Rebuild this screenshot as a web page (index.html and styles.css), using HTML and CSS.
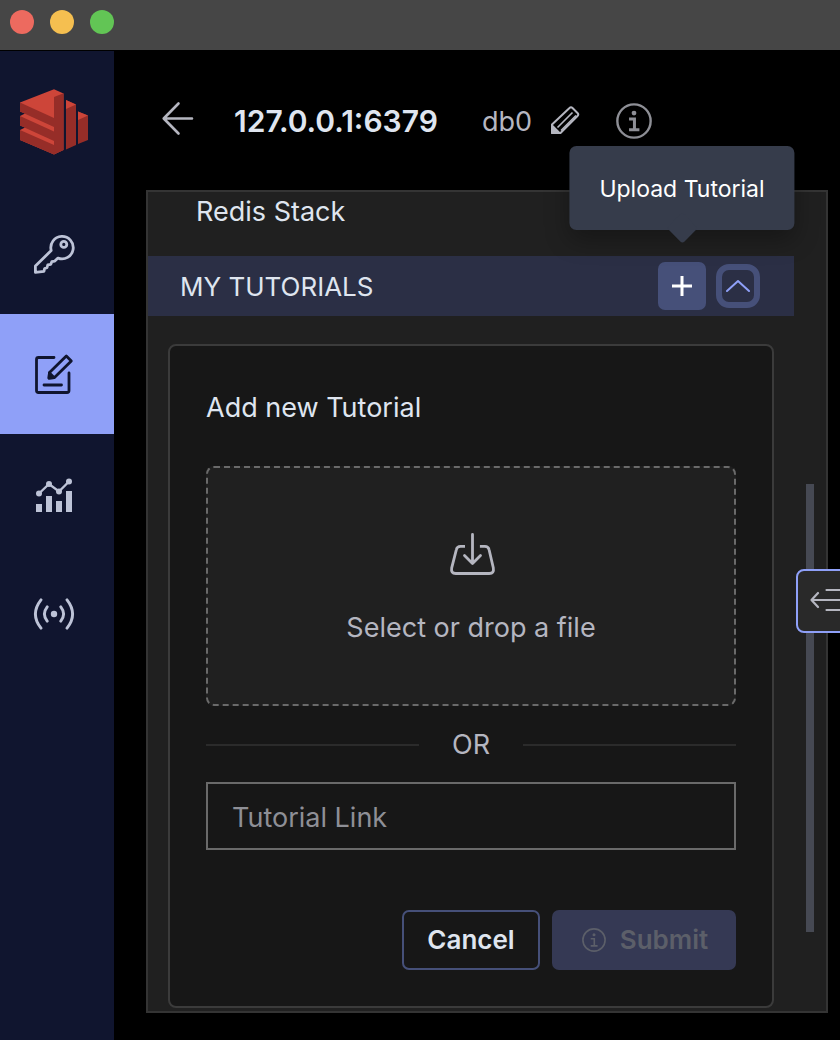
FILE: index.html
```html
<!DOCTYPE html>
<html lang="en">
<head>
<meta charset="utf-8">
<meta name="viewport" content="width=device-width, initial-scale=1">
<title>Redis Insight – Workbench</title>
<link rel="stylesheet" href="styles.css">
</head>
<body>
<div class="window">
  <div class="titlebar">
    <span class="light light-close"></span>
    <span class="light light-min"></span>
    <span class="light light-max"></span>
  </div>
  <div class="body">
    <nav class="sidebar" aria-label="Main">
      <a class="logo" href="#home" aria-label="Home">
        <svg width="68" height="66" viewBox="20 89 68 66">
          <path fill="#cd4539" d="M20 102.500 54 89.200l9.500 4.300V150L54 154.500 20 140v-10l5-2.500-5-2V116l5-2.500-5-2z"/>
          <path fill="#962d28" d="M54 97l9.500-3.700V150L54 154.500 20 140v-10l34 15v-4L20 125.500V116l34 15.500v-4.500L20 111.500v-9L54 118z"/>
          <path fill="#962d28" d="M66 100l10 4.500V145l-10 4.500zM78 111.500l10 4V140l-10 4z"/>
          <path fill="#cd4539" d="M66 100l10 4.500-10 4.500zM78 111.500l10 4-10 4.500z"/>
        </svg>
      </a>
      <a class="nav-item" href="#browser" aria-label="Browser">
        <svg width="44" height="44" viewBox="32 232 44 44" fill="none" stroke="currentColor" stroke-width="2.800" stroke-linejoin="round">
          <path d="M51.200 250.500a11.200 11.200 0 1 1 6.800 7.600l-3.200 3-3 .6-1 2.600-3 .6-.8 2.800-2.400.8-.6 2.800-8.600 1v-6.200z"/>
          <circle cx="63.800" cy="244.400" r="3"/>
        </svg>
      </a>
      <a class="nav-item active" href="#workbench" aria-label="Workbench" aria-current="page">
        <svg width="44" height="44" viewBox="32 352 44 44" fill="none" stroke="currentColor" stroke-width="2.800" stroke-linecap="round" stroke-linejoin="round">
          <path d="M54 357.500H38.500a2 2 0 0 0-2 2v31a2 2 0 0 0 2 2h28.500a2 2 0 0 0 2-2V373"/>
          <path d="M44 385h17.500M66.300 356l5 5L54.500 377.500l-5.500.500.500-5.500z"/>
          <path fill="currentColor" d="M49.500 373l4.500 4.500-5 .5z"/>
        </svg>
      </a>
      <a class="nav-item" href="#analysis" aria-label="Analysis tools">
        <svg width="44" height="44" viewBox="32 472 44 44" fill="currentColor">
          <path d="M36 504h6v8h-6zM46 496h6v16h-6zM56 501h6v11h-6zM66 491h6v21h-6z"/>
          <path d="M39 493.500l10-9.500 10 7.500 10-10" fill="none" stroke="currentColor" stroke-width="2.400"/>
          <circle cx="39" cy="493.500" r="3"/><circle cx="49" cy="484" r="3"/><circle cx="59" cy="491.500" r="3"/><circle cx="69" cy="481.500" r="3"/>
        </svg>
      </a>
      <a class="nav-item" href="#pubsub" aria-label="Pub/Sub">
        <svg width="44" height="44" viewBox="32 592 44 44" fill="none" stroke="currentColor" stroke-width="2.900" stroke-linecap="round">
          <circle cx="54" cy="614" r="3.200" fill="currentColor" stroke="none"/>
          <path d="M41 599.800q-11.200 14.200 0 28.400M67 599.800q11.200 14.200 0 28.400M47.200 606.800q-5.600 7.200 0 14.400M60.800 606.800q5.600 7.200 0 14.400"/>
        </svg>
      </a>
    </nav>
    <main class="main">
      <header class="header">
        <button class="icon-btn back" aria-label="Back">
          <svg width="32" height="34" viewBox="162 104 32 34" fill="none" stroke="currentColor" stroke-width="2.600" stroke-linecap="round" stroke-linejoin="round" overflow="visible"><path d="M192 118.500h-28.200M178.500 103.500l-14.800 15 14.800 15"/></svg>
        </button>
        <h1 class="host">127.0.0.1:6379</h1>
        <span class="db">db0</span>
        <button class="icon-btn edit" aria-label="Edit database index">
          <svg width="30" height="30" viewBox="550 106 30 30" fill="none" stroke="currentColor" stroke-width="2" stroke-linejoin="round"><path d="M569.500 108q1.500-1.500 3 0l5 5q1.500 1.500 0 3L560.500 133H552v-8.500z"/><path d="M557.500 127.500l15-15M561 130.500l15-15" stroke-width="1.600"/><path d="M552 125.500l7.500 7.500H552z" fill="currentColor"/></svg>
        </button>
        <button class="icon-btn info" aria-label="Database info">
          <svg width="36" height="36" viewBox="0 0 24 24" fill="none" stroke="currentColor" stroke-width="1.600"><circle cx="12" cy="12" r="11.100"/><path d="M8.700 10.700h3.600v7M8.700 17.900h6.900" stroke-width="2"/><circle cx="12" cy="6.700" r="1.600" fill="currentColor" stroke="none"/></svg>
        </button>
      </header>
      <section class="panel">
        <div class="content">
          <a class="doc-link" href="#redis-stack">Redis Stack</a>
          <div class="group-bar">
            <h2 class="group-title">MY TUTORIALS</h2>
            <div class="upload">
              <button class="add" aria-label="Upload Tutorial" aria-describedby="upload-tip">
                <svg width="20" height="20" viewBox="0 0 20 20" stroke="currentColor" stroke-width="3"><path d="M10 0v20M0 10h20"/></svg>
              </button>
              <div class="tooltip" id="upload-tip" role="tooltip">Upload Tutorial</div>
            </div>
            <button class="collapse" aria-label="Collapse my tutorials">
              <svg width="24" height="14" viewBox="0 0 24 14" fill="none" stroke="currentColor" stroke-width="2" stroke-linecap="round" stroke-linejoin="round"><path d="M1 12 12 2l11 10"/></svg>
            </button>
          </div>
          <form class="card">
            <h3 class="card-title">Add new Tutorial</h3>
            <button class="dropzone" type="button">
              <svg width="46" height="44" viewBox="448 532 46 44" fill="none" stroke="currentColor" stroke-width="2.800" stroke-linecap="round" stroke-linejoin="round" overflow="visible"><path d="M472.500 534.500V563M464.500 555.500l8 8 8-8"/><path stroke-linecap="butt" d="M465 546.300h-4.500q-3.500 0-4.200 3.500l-4.600 18q-1 5.700 4 5.700h33.600q5 0 4-5.700l-4.200-18q-.7-3.500-4.200-3.500h-5"/></svg>
              <span>Select or drop a file</span>
            </button>
            <div class="divider">OR</div>
            <input class="link-input" type="text" placeholder="Tutorial Link" aria-label="Tutorial Link">
            <div class="actions">
              <button class="btn btn-cancel" type="button">Cancel</button>
              <button class="btn btn-submit" type="submit" disabled>
                <svg width="24" height="24" viewBox="0 0 24 24" fill="none" stroke="currentColor" stroke-width="1.600"><circle cx="12" cy="12" r="11.100"/><path d="M8.700 10.700h3.600v7M8.700 17.900h6.900"/><circle cx="12" cy="6.700" r="1.500" fill="currentColor" stroke="none"/></svg>
                Submit
              </button>
            </div>
          </form>
        </div>
        <div class="rail"><div class="thumb"></div></div>
        <button class="drawer-toggle" aria-label="Toggle enablement area">
          <svg width="32" height="26" viewBox="810 588 32 26" fill="none" stroke="currentColor" stroke-width="2.200" stroke-linecap="round" stroke-linejoin="round"><path d="M811.500 600H842M818 593l-6.500 7 6.500 7M826.500 590H842M826.500 610H842"/></svg>
        </button>
      </section>
    </main>
  </div>
</div>
</body>
</html>
```
FILE: styles.css
```css
* { box-sizing: border-box; }

body {
  margin: 0;
  background: #000;
  color: #dfe5ef;
  font-family: Inter, "Liberation Sans", sans-serif;
  font-size: 27px;
  font-weight: 400;
  line-height: 32px;
}

h1, h2, h3 { margin: 0; font-size: inherit; font-weight: inherit; }

button, input { font: inherit; margin: 0; }

button { padding: 0; border: 0; background: none; color: inherit; }

svg { display: block; flex: none; }

.window {
  display: flex;
  flex-direction: column;
  min-height: 100vh;
  overflow: hidden;
}

.titlebar {
  display: flex;
  gap: 16px;
  height: 50px;
  padding: 10px;
  background: #464646;
}

.light { width: 24px; height: 24px; border-radius: 50%; }
.light-close { background: #ed6a5f; }
.light-min { background: #f5bf50; }
.light-max { background: #62c555; }

.body { display: flex; flex: 1; padding-top: 1px; }

.sidebar { flex: none; width: 114px; background: #10152f; }

.logo { display: block; padding: 38px 20px 39px; }

.nav-item {
  display: flex;
  align-items: center;
  height: 120px;
  padding-left: 32px;
  color: #bdc3d7;
}
.nav-item.active { background: #8fa0f8; color: #10152f; }

.main {
  display: flex;
  flex: 1;
  flex-direction: column;
  min-width: 0;
  padding: 0 12px 27px 32px;
}

.header {
  display: flex;
  align-items: center;
  height: 139px;
  padding-left: 16px;
}

.icon-btn { color: #b5b6c0; }
.back { margin-right: 40px; }
.host { font-size: 30px; font-weight: 600; }
.db { margin-left: 44px; padding-top: 2px; color: #b5b6c0; }
.edit { margin-left: 18px; }
.info { margin-left: 36px; color: #8e8f96; }

.panel {
  position: relative;
  display: flex;
  flex: 1;
  border: 2px solid #343434;
  background: #202020;
}

.content { flex: 1; min-width: 0; padding-bottom: 3px; }

.doc-link {
  display: block;
  padding: 4px 48px 28px;
  color: inherit;
  text-decoration: none;
}

.group-bar {
  display: flex;
  align-items: center;
  height: 60px;
  padding: 0 34px 0 32px;
  background: #2b2f45;
}
.group-title { flex: 1; padding-top: 2px; font-size: 26px; }

.upload { position: relative; margin-right: 10px; }

.add {
  display: grid;
  place-items: center;
  width: 48px;
  height: 48px;
  border-radius: 7px;
  background: #465079;
  color: #fff;
}

.collapse {
  display: grid;
  place-items: center;
  width: 44px;
  height: 44px;
  border: 6px solid #465079;
  border-radius: 13px;
  color: #8fa0f8;
}

.tooltip {
  position: absolute;
  bottom: 80px;
  left: 50%;
  padding: 27px 30px 25px;
  transform: translateX(-50%);
  border-radius: 7px;
  background: #363c4b;
  box-shadow: 0 10px 24px rgba(0, 0, 0, .3);
  color: #fff;
  font-size: 23px;
  white-space: nowrap;
}
.tooltip::after {
  content: "";
  position: absolute;
  bottom: -9px;
  left: calc(50% - 11px);
  width: 22px;
  height: 22px;
  transform: rotate(45deg);
  border-radius: 3px;
  background: #363c4b;
}

.card {
  margin: 28px 20px 0;
  padding: 46px 36px 36px;
  border: 2px solid #3b3b3b;
  border-radius: 8px;
  background: #171717;
}

.dropzone {
  display: flex;
  flex-direction: column;
  align-items: center;
  gap: 36px;
  width: 100%;
  margin-top: 42px;
  padding: 64px 20px 60px;
  border: 2px dashed #6a6a6a;
  border-radius: 8px;
  background: #202020;
  color: #b5b6c0;
}

.divider {
  display: flex;
  align-items: center;
  gap: 33px;
  margin: 23px 0 21px;
  color: #b5b6c0;
}
.divider::before, .divider::after {
  content: "";
  flex: 1;
  height: 2px;
  background: #2b2b2b;
}

.link-input {
  display: block;
  width: 100%;
  height: 68px;
  padding: 2px 24px 0;
  border: 2px solid #6a6a6a;
  border-radius: 0;
  background: #171717;
  color: #dfe5ef;
}
.link-input::placeholder { color: #8e8f96; opacity: 1; }

.actions {
  display: flex;
  justify-content: flex-end;
  gap: 12px;
  margin-top: 60px;
}

.btn {
  display: flex;
  align-items: center;
  justify-content: center;
  gap: 14px;
  height: 60px;
  border-radius: 7px;
  font-size: 26px;
  font-weight: 600;
}
.btn-cancel { width: 138px; border: 2px solid #465079; }
.btn-submit { width: 184px; padding-left: 2px; background: #353954; color: #5c5f69; }

.rail {
  display: flex;
  flex-direction: column;
  align-items: center;
  width: 32px;
}
.rail::before { content: ""; flex: 292; }
.rail::after { content: ""; flex: 79; }
.thumb { flex: 448; width: 8px; background: #464953; }

.drawer-toggle {
  position: absolute;
  top: 377px;
  right: -24px;
  display: flex;
  align-items: center;
  width: 54px;
  height: 64px;
  padding-left: 12px;
  border: 2px solid #8fa0f8;
  border-radius: 8px;
  background: #292929;
  color: #b5b6c0;
}
```
